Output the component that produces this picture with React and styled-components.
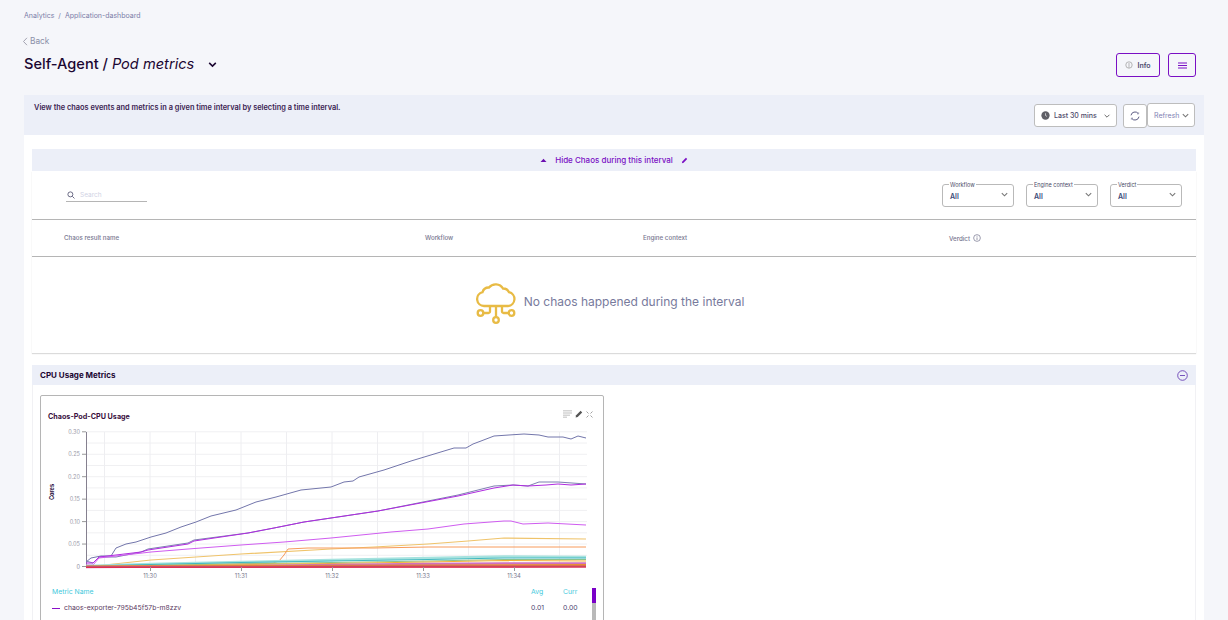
import React from "react";
import styled, { createGlobalStyle } from "styled-components";

const Global = createGlobalStyle`
  html, body { margin: 0; padding: 0; height: 620px; overflow: hidden; background: #f5f6fa; }
  body { font-family: Inter, "Liberation Sans", sans-serif; color: #1c0732; }
  #root { height: 620px; overflow: hidden; }
  * { box-sizing: border-box; }
`;

const Page = styled.div`
  height: 620px;
  overflow: hidden;
  padding: 0 24px;
`;
const Breadcrumb = styled.div`
  display: flex;
  gap: 4px;
  height: 35px;
  padding-top: 10px;
  font-size: 7px;
  line-height: 11px;
  color: #7a7da8;
`;
const BackLink = styled.div`
  display: flex;
  align-items: center;
  gap: 1px;
  height: 12px;
  margin-left: -2px;
  font-size: 8.3px;
  color: #8a8fa8;
`;
const TitleBar = styled.div`
  display: flex;
  justify-content: space-between;
  height: 48px;
  padding-right: 8px;
`;
const TitleWrap = styled.div`
  display: flex;
  align-items: center;
  height: 22px;
  margin-top: 6px;
`;
const Title = styled.h1`
  margin: 0;
  font-size: 14.6px;
  font-weight: 500;
  line-height: 22px;
  color: #1c0732;
  em { font-weight: 400; }
`;
const TitleChevron = styled.span`
  display: flex;
  margin: 1px 0 0 13px;
`;
const Actions = styled.div`
  display: flex;
  gap: 8px;
  margin-top: 6px;
`;
const OutlineButton = styled.button`
  display: flex;
  align-items: center;
  justify-content: center;
  gap: 4px;
  width: ${(p) => p.$w}px;
  height: 24px;
  padding: 0;
  background: transparent;
  border: 1.5px solid #7a0fc4;
  border-radius: 3px;
  font: 600 7px Inter, sans-serif;
  color: #4b4a6c;
`;
const Band = styled.div`
  display: flex;
  justify-content: space-between;
  height: 40px;
  padding: 0 9px 0 10px;
  background: #eceff8;
`;
const BandText = styled.p`
  margin: 8px 0 0;
  font-size: 7.4px;
  line-height: 10px;
  font-weight: 600;
  color: #3b2352;
`;
const BandControls = styled.div`
  display: flex;
  align-items: flex-start;
  padding-top: 8px;
`;
const TimeBox = styled.div`
  display: flex;
  align-items: center;
  width: 83px;
  height: 23px;
  margin: 1px 6px 0 0;
  padding: 0 5px 0 6px;
  background: #fff;
  border: 1px solid #bdbdbd;
  border-radius: 3px;
  font-size: 7px;
  font-weight: 500;
  color: #4e4a6a;
  span { margin: 0 auto 0 4px; }
`;
const SyncBox = styled.div`
  display: flex;
  align-items: center;
  justify-content: center;
  width: 24px;
  height: 24px;
  margin-top: 1px;
  background: #fff;
  border: 1px solid #bdbdbd;
  border-radius: 3px;
`;
const RefreshBox = styled.div`
  display: flex;
  align-items: center;
  justify-content: space-between;
  width: 48px;
  height: 24px;
  padding: 0 4px 0 6px;
  background: #fff;
  border: 1px solid #bdbdbd;
  border-radius: 3px;
  font-size: 7px;
  color: #7f82b4;
`;
const Panel = styled.div`
  height: 500px;
  padding: 14px 8px 0;
  background: #fff;
`;
const ChaosHeader = styled.div`
  display: flex;
  align-items: center;
  justify-content: center;
  gap: 8px;
  height: 22px;
  background: #eceff8;
  font-size: 8px;
  font-weight: 500;
  color: #7a0fc4;
`;
const ChaosCard = styled.div`
  height: 182px;
  background: #fff;
  box-shadow: 0 1px 1px rgba(0, 0, 0, 0.14);
`;
const FilterRow = styled.div`
  display: flex;
  justify-content: space-between;
  height: 48px;
  padding: 13px 14px 0 34px;
`;
const SearchBox = styled.div`
  display: flex;
  align-items: center;
  gap: 5px;
  width: 81px;
  height: 18px;
  padding: 4px 0 0 1px;
  border-bottom: 1px solid #b5b5b5;
  font-size: 6.5px;
  color: #cfd2e4;
`;
const Filters = styled.div`
  display: flex;
  gap: 12px;
`;
const SelectBox = styled.fieldset`
  position: relative;
  width: 72px;
  height: 26px;
  margin: -3px 0 0;
  padding: 0 7px;
  border: 1px solid #b9b9b9;
  border-radius: 3px;
  legend {
    position: relative;
    top: 1px;
    padding: 0 1px;
    margin-left: -1px;
    font-size: 5.5px;
    line-height: 7px;
    color: #4a4a66;
  }
  strong {
    display: block;
    margin-top: 4px;
    font-size: 7px;
    line-height: 10px;
    font-weight: 600;
    color: #3c4a78;
  }
`;
const SelectChevron = styled.span`
  position: absolute;
  right: 4px;
  top: 2px;
  display: flex;
`;
const TableHead = styled.div`
  display: grid;
  grid-template-columns: 361px 218px 306px 1fr;
  align-items: center;
  height: 38px;
  padding: 0 0 2px 32px;
  border-top: 1px solid #b5b5b5;
  border-bottom: 1px solid #b5b5b5;
  font-size: 6.2px;
  font-weight: 500;
  color: #77768f;
`;
const HeadCell = styled.div`
  display: flex;
  align-items: center;
  gap: 3px;
  ${(p) => p.$low && "padding-top: 2px;"}
`;
const EmptyRow = styled.div`
  display: flex;
  align-items: center;
  justify-content: center;
  gap: 8px;
  height: 94px;
  padding: 0 8px 6px 0;
  font-size: 12px;
  color: #777a9c;
`;
const CloudIcon = styled.svg`
  margin-top: 4px;
`;
const SectionHeader = styled.div`
  display: flex;
  align-items: center;
  justify-content: space-between;
  height: 20px;
  margin-top: 12px;
  padding: 0 8px;
  background: #eceff8;
  font-size: 8px;
  font-weight: 700;
  color: #1c0732;
`;
const ChartArea = styled.div`
  height: 300px;
  padding: 10px 0 0 8px;
  box-shadow: inset 1px 0 0 #f1f1f4, inset -1px 0 0 #f1f1f4;
`;
const ChartCard = styled.div`
  width: 564px;
  height: 300px;
  padding: 0 0 0 7px;
  border: 1px solid #b5b5b5;
  border-radius: 2px 2px 0 0;
`;
const ChartTop = styled.div`
  display: flex;
  justify-content: space-between;
  align-items: flex-start;
  height: 30px;
  padding: 14px 10px 0 0;
`;
const ChartTitle = styled.h3`
  margin: 1px 0 0;
  font-size: 7.2px;
  line-height: 11px;
  font-weight: 700;
  color: #3a1040;
`;
const ChartTools = styled.div`
  display: flex;
  align-items: center;
  gap: 3px;
`;
const Plot = styled.svg`
  display: block;
  margin-left: -7px;
`;
const LegendWrap = styled.div`
  position: relative;
  padding: 0 0 0 4px;
`;
const LegendGrid = styled.div`
  display: grid;
  grid-template-columns: 479px 32px 30px;
  row-gap: 6px;
  font-size: 6.85px;
  line-height: 10px;
`;
const LegendHead = styled.div`
  color: #3fc9dc;
`;
const MetricName = styled.div`
  display: flex;
  align-items: center;
  gap: 4px;
  color: #5b3a62;
  i {
    width: 8px;
    height: 1px;
    background: #8a0fc8;
  }
`;
const MetricValue = styled.div`
  color: #4a4672;
`;
const ScrollTrack = styled.div`
  position: absolute;
  top: 1px;
  right: 7px;
  width: 4px;
  height: 40px;
  background: #b9b9b9;
`;
const ScrollThumb = styled.div`
  height: 15px;
  background: #7a00c8;
`;

const Chevron = ({ size = 8, color = "#666", w = 1.2 }) => (
  <svg width={size} height={size} viewBox="0 0 10 10" fill="none" stroke={color} strokeWidth={w}>
    <path d="M2 3.5 5 6.5 8 3.5" />
  </svg>
);

const X0 = 85;
const Y0 = 567;
const VALS = [0.05, 0.1, 0.15, 0.2, 0.25, 0.3];

const series = [
  { c: "#7376ab", w: 1, p: "85,562 90,558 100,556 110,556 115,548 125,544 135,542 150,537 165,533 180,527 195,522 210,516 235,510 255,502 275,497 300,490 330,487 343,482 352,481 358,477 383,470 410,461 453,448 465,448 472,444 480,441 493,436 523,434 538,435 547,437 562,437 570,439 577,436 585,438" },
  { c: "#7d7fb0", w: 1, p: "85,561 92,563 98,557 115,557 140,552 147,549 187,543 193,540 247,533 273,528 303,522 330,518 377,511 457,495 493,486 512,485 527,486 538,482 557,482 585,484" },
  { c: "#b02be0", w: 1, p: "85,563 92,563 98,557 115,555 140,552 147,550 187,544 193,541 247,533 273,528 303,522 330,518 377,511 457,496 493,488 512,485 527,486 545,485 557,484 570,485 585,484" },
  { c: "#cf5cf0", w: 1, p: "85,565 92,565 98,558 115,556 150,552 187,549 240,545 283,542 330,538 390,532 427,529 463,524 503,521 510,521 522,524 547,523 585,525" },
  { c: "#efc36a", w: 1.2, p: "85,567 150,560 240,554 330,549 373,547 427,544 467,541 503,538 585,539" },
  { c: "#f79a5a", w: 1, p: "85,567 272,563 278,561 283,555 287,549 307,548 330,548 373,548 427,547 503,547 540,547 585,547" },
  { c: "#a6e2de", w: 2.5, p: "85,566 150,564 240,562 330,560 427,558 503,556.5 585,557" },
  { c: "#3fb8c0", w: 1, p: "85,566 150,564.5 240,562.5 330,561 427,559.5 503,558 585,558" },
  { c: "#8bc28a", w: 1, p: "85,566.5 200,564.5 330,562.5 427,561 503,559.5 585,559.5" },
  { c: "#f2b233", w: 1.2, p: "85,566.5 250,564.5 330,563.5 427,562 503,560.5 585,561" },
  { c: "#d070c0", w: 2.5, p: "85,567 250,566 330,565 427,564 503,563.5 585,563.5" },
  { c: "#e89030", w: 1.8, p: "85,566.5 250,566 427,565.5 585,565" },
  { c: "#c8506e", w: 2.2, p: "85,567 250,566.8 427,566.5 585,566.5" },
  { c: "#e03050", w: 1.2, p: "85,567.5 300,567.2 585,567" },
];

const ChartPlot = () => {
  const h = Array.from({ length: 12 }, (_, i) => Y0 - 0.5 - (i + 1) * 11.225);
  const v = Array.from({ length: 11 }, (_, i) => 103.5 + i * 45.5);
  return (
    <Plot width="563" height="161" viewBox="40 426 563 161">
      {h.map((y) => (
        <line key={y} x1={X0} x2={586} y1={y} y2={y} stroke="#f0f0f2" strokeWidth="1" />
      ))}
      {v.map((x) => (
        <line key={x} x1={x} x2={x} y1={432} y2={567} stroke="#eeeef1" strokeWidth="1" />
      ))}
      <line x1={X0 + 0.5} x2={X0 + 0.5} y1={432} y2={567} stroke="#85808f" strokeWidth="1" />
      <text x="79" y="569" textAnchor="end" fontSize="5.6" fill="#8a8a9c" fontFamily="Inter, sans-serif">0</text>
      <line x1={81} x2={X0} y1={566.5} y2={566.5} stroke="#999" />
      {VALS.map((val, i) => {
        const y = 566.5 - (i + 1) * 22.45;
        return (
          <g key={val}>
            <line x1={81} x2={X0} y1={y} y2={y} stroke="#999" />
            <text x="79" y={y + 2} textAnchor="end" fontSize="5.6" fill="#9a9aa8" fontFamily="Inter, sans-serif">
              {val.toFixed(2)}
            </text>
          </g>
        );
      })}
      {series.map((s, i) => (
        <polyline key={i} points={s.p} fill="none" stroke={s.c} strokeWidth={s.w} />
      ))}
      {["11:30", "11:31", "11:32", "11:33", "11:34"].map((t, i) => (
        <g key={t}>
          <line x1={149.5 + i * 91} x2={149.5 + i * 91} y1={567} y2={571} stroke="#999" />
          <text x={149 + i * 91} y="578" textAnchor="middle" fontSize="5.8" fill="#77778c" fontFamily="Inter, sans-serif">
            {t}
          </text>
        </g>
      ))}
      <text
        transform="translate(53 492) rotate(-90)"
        textAnchor="middle"
        fontSize="5.6"
        fontWeight="700"
        fill="#2a1040"
        fontFamily="Inter, sans-serif"
      >
        Cores
      </text>
    </Plot>
  );
};

const Filter = ({ label }) => (
  <SelectBox>
    <legend>{label}</legend>
    <strong>All</strong>
    <SelectChevron>
      <Chevron size={9} color="#777" />
    </SelectChevron>
  </SelectBox>
);

export default function App() {
  return (
    <Page>
      <Global />
      <Breadcrumb>
        <span>Analytics</span>
        <span>/</span>
        <span>Application-dashboard</span>
      </Breadcrumb>
      <BackLink>
        <svg width="7" height="9" viewBox="0 0 7 9" fill="none" stroke="#9a9aa8" strokeWidth="0.9">
          <path d="M5 .8 1.5 4.5 5 8.2" />
        </svg>
        Back
      </BackLink>
      <TitleBar>
        <TitleWrap>
          <Title>
            Self-Agent / <em>Pod metrics</em>
          </Title>
          <TitleChevron>
            <Chevron size={11} color="#1c0732" w={1.4} />
          </TitleChevron>
        </TitleWrap>
        <Actions>
          <OutlineButton $w={44}>
            <svg width="8" height="8" viewBox="0 0 10 10" fill="none" stroke="#a5a5a5" strokeWidth="1">
              <circle cx="5" cy="5" r="4" />
              <path d="M5 2.5v4M4 7.5h2" />
            </svg>
            Info
          </OutlineButton>
          <OutlineButton $w={28}>
            <svg width="9" height="7" viewBox="0 0 9 7" fill="none" stroke="#7a0fc4" strokeWidth="1.2">
              <path d="M0 1h9M0 3.5h9M0 6h9" />
            </svg>
          </OutlineButton>
        </Actions>
      </TitleBar>
      <Band>
        <BandText>View the chaos events and metrics in a given time interval by selecting a time interval.</BandText>
        <BandControls>
          <TimeBox>
            <svg width="9" height="9" viewBox="0 0 10 10">
              <circle cx="5" cy="5" r="4.6" fill="#5f5f66" />
              <path d="M5 2.5V5l1.6 1" fill="none" stroke="#fff" strokeWidth=".7" />
            </svg>
            <span>Last 30 mins</span>
            <Chevron size={8} color="#666" />
          </TimeBox>
          <SyncBox>
            <svg width="10" height="10" viewBox="0 0 12 12" fill="none" stroke="#5c5c84" strokeWidth="1.2">
              <path d="M1.200 5.200A4.900 4.900 0 0 1 9.800 2.900M10.800 6.800A4.900 4.900 0 0 1 2.200 9.100" />
              <path d="M10.400 1.500v2H8.400M1.600 10.500v-2h2" strokeWidth=".6" />
            </svg>
          </SyncBox>
          <RefreshBox>
            Refresh
            <Chevron size={9} color="#777" />
          </RefreshBox>
        </BandControls>
      </Band>
      <Panel>
        <ChaosHeader>
          <svg width="7" height="5" viewBox="0 0 7 5">
            <path d="M3.5 .8 6.5 4H.5z" fill="#6b0fb0" />
          </svg>
          Hide Chaos during this interval
          <svg width="7" height="7" viewBox="0 0 8 8">
            <path d="M1 7l.5-2L5.6.9l1.500 1.500L3 6.500z" fill="#7a0fc4" />
          </svg>
        </ChaosHeader>
        <ChaosCard>
          <FilterRow>
            <SearchBox>
              <svg width="8" height="8" viewBox="0 0 9 9" fill="none" stroke="#5a5a78" strokeWidth="1">
                <circle cx="3.8" cy="3.8" r="2.8" />
                <path d="M6 6l2.4 2.4" />
              </svg>
              Search
            </SearchBox>
            <Filters>
              <Filter label="Workflow" />
              <Filter label="Engine context" />
              <Filter label="Verdict" />
            </Filters>
          </FilterRow>
          <TableHead>
            <HeadCell>Chaos result name</HeadCell>
            <HeadCell>Workflow</HeadCell>
            <HeadCell>Engine context</HeadCell>
            <HeadCell $low>
              Verdict
              <svg width="8" height="8" viewBox="0 0 10 10" fill="none" stroke="#77768f" strokeWidth=".9">
                <circle cx="5" cy="5" r="4.2" />
                <path d="M5 4.2v3.3M5 2.4v1" />
              </svg>
            </HeadCell>
          </TableHead>
          <EmptyRow>
            <CloudIcon width="40" height="42" viewBox="0 0 40 42" fill="none" stroke="#e8bb45" strokeWidth="2.300">
              <path d="M8 24a7 7 0 0 1-1.500-13.800A6.500 6.500 0 0 1 13 5.500a8.500 8.500 0 0 1 14 1 6.500 6.500 0 0 1 6 3.700A7 7 0 0 1 32 24z" />
              <path d="M20 24v11M14 24v5.500a1.500 1.500 0 0 1-1.500 1.500H7M26 24v5.500a1.500 1.500 0 0 0 1.500 1.500H33" />
              <circle cx="4.500" cy="31" r="2.800" />
              <circle cx="35.500" cy="31" r="2.800" />
              <circle cx="20" cy="38" r="2.800" />
            </CloudIcon>
            No chaos happened during the interval
          </EmptyRow>
        </ChaosCard>
        <SectionHeader>
          CPU Usage Metrics
          <svg width="11" height="11" viewBox="0 0 11 11" fill="none" stroke="#6a3fb5" strokeWidth=".9">
            <circle cx="5.500" cy="5.500" r="4.800" />
            <path d="M3 5.500h5" />
          </svg>
        </SectionHeader>
        <ChartArea>
          <ChartCard>
            <ChartTop>
              <ChartTitle>Chaos-Pod-CPU Usage</ChartTitle>
              <ChartTools>
                <svg width="9" height="8" viewBox="0 0 9 8">
                  <path d="M0 0h9v1.600H0zM0 2.200h9v1.600H0zM0 4.400h7v1.600H0zM0 6.400h4V8H0z" fill="#d4d4d4" />
                </svg>
                <svg width="8" height="8" viewBox="0 0 8 8">
                  <path d="M.6 7.400l.5-2.100L5.600.8l1.600 1.600-4.500 4.500z" fill="#555" />
                </svg>
                <svg width="7" height="7" viewBox="0 0 7 7" fill="none" stroke="#8a8a8a" strokeWidth=".8">
                  <path d="M.5.500l2 2M6.500.500l-2 2M.5 6.500l2-2M6.500 6.500l-2-2" />
                </svg>
              </ChartTools>
            </ChartTop>
            <ChartPlot />
            <LegendWrap>
              <LegendGrid>
                <LegendHead>Metric Name</LegendHead>
                <LegendHead>Avg</LegendHead>
                <LegendHead>Curr</LegendHead>
                <MetricName>
                  <i />
                  chaos-exporter-795b45f57b-m8zzv
                </MetricName>
                <MetricValue>0.01</MetricValue>
                <MetricValue>0.00</MetricValue>
              </LegendGrid>
              <ScrollTrack>
                <ScrollThumb />
              </ScrollTrack>
            </LegendWrap>
          </ChartCard>
        </ChartArea>
      </Panel>
    </Page>
  );
}
